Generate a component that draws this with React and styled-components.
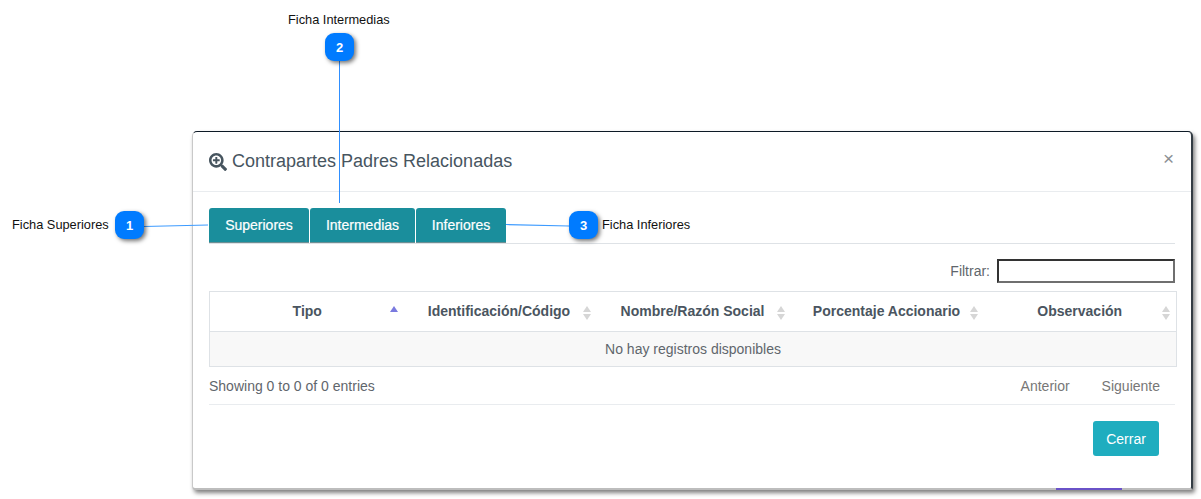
import React from "react";
import styled, { createGlobalStyle } from "styled-components";
import { FaSearchPlus } from "react-icons/fa";

const Global = createGlobalStyle`
  html, body { margin: 0; padding: 0; background: #fff; }
  body { font-family: "Liberation Sans", Arial, sans-serif; }
`;

const Page = styled.div`
  position: relative;
  width: 1201px;
  height: 499px;
  overflow: hidden;
  box-sizing: border-box;
  padding: 131px 8px 0 192px;
`;

const Modal = styled.div`
  position: relative;
  box-sizing: border-box;
  width: 1001px;
  height: 359px;
  background: #fff;
  border-left: 1px solid #c9c9c9;
  border-top: 1px solid #0d1a26;
  border-right: 2px solid #333c44;
  border-bottom: 2px solid #bdbdbd;
  border-radius: 5px 5px 3px 4px;
  box-shadow: 2px 3px 4px rgba(0, 0, 0, 0.5);
`;

const Header = styled.div`
  height: 60px;
  box-sizing: border-box;
  border-bottom: 1px solid #e9ecef;
  display: flex;
  align-items: center;
  justify-content: space-between;
  padding: 0 17px 0 16px;
`;

const Title = styled.h5`
  margin: 0;
  font-size: 18px;
  font-weight: 400;
  color: #47555f;
  display: flex;
  align-items: center;
  gap: 5px;
`;

const Close = styled.span`
  font-size: 19px;
  color: #8b8f93;
  margin-top: -6px;
`;

const Body = styled.div`
  padding: 16px 15px 0 16px;
`;

const Tabs = styled.div`
  display: flex;
  gap: 1px;
  width: 966px;
  height: 36px;
  box-sizing: border-box;
  border-bottom: 1px solid #dee2e6;
`;

const Tab = styled.div`
  height: 35px;
  box-sizing: border-box;
  width: ${p => p.$w}px;
  background: #1a8e9c;
  color: #fff;
  font-size: 14px;
  border-radius: 3px 3px 0 0;
  border-bottom: 1px solid #6d8f94;
  display: flex;
  align-items: center;
  justify-content: center;
  -webkit-text-stroke: 0.2px #fff;
`;

const FilterRow = styled.div`
  display: flex;
  justify-content: flex-end;
  align-items: center;
  gap: 7px;
  width: 966px;
  margin-top: 15px;
  font-size: 14px;
  color: #5f666c;
`;

const FilterInput = styled.div`
  width: 178px;
  height: 24px;
  box-sizing: border-box;
  border: 2px solid;
  border-color: #333 #6f6f6f #6f6f6f #333;
`;

const Table = styled.table`
  width: 967px;
  margin-top: 8px;
  border-collapse: collapse;
  table-layout: fixed;
  font-size: 14px;
  color: #4a5560;
`;

const Th = styled.th`
  position: relative;
  height: 40px;
  padding: 0 0 1px;
  box-sizing: border-box;
  width: ${p => p.$w}px;
  border-top: 1px solid #dee2e6;
  border-bottom: 1px solid #dee2e6;
  font-weight: 700;
  text-align: center;
  &:first-child { border-left: 1px solid #dee2e6; }
  &:last-child { border-right: 1px solid #dee2e6; padding-left: 2px; }
`;

const Sort = styled.svg`
  position: absolute;
  right: ${p => p.$right}px;
  top: 13px;
`;

const Empty = styled.td`
  height: 34px;
  padding: 0;
  text-align: center;
  background: #f8f8f8;
  border: 1px solid #dee2e6;
  color: #5f666c;
`;

const InfoRow = styled.div`
  display: flex;
  justify-content: space-between;
  align-items: center;
  width: 966px;
  height: 38px;
  box-sizing: border-box;
  padding-top: 1px;
  border-bottom: 1px solid #e9ecef;
  font-size: 14px;
  color: #5f666c;
`;

const Pager = styled.div`
  display: flex;
  gap: 32px;
  margin-right: 15px;
  color: #777;
`;

const Footer = styled.div`
  display: flex;
  justify-content: flex-end;
  width: 950px;
  margin-top: 16px;
`;

const CloseButton = styled.div`
  width: 66px;
  height: 35px;
  display: flex;
  align-items: center;
  justify-content: center;
  background: #1fadbf;
  color: #fff;
  font-size: 14px;
  border-radius: 3px;
`;

const Strip = styled.div`
  position: absolute;
  left: 863px;
  bottom: -2px;
  width: 66px;
  height: 2px;
  background: #6a52c8;
`;

const Badge = styled.div`
  position: absolute;
  left: ${p => p.$x}px;
  top: ${p => p.$y}px;
  width: 29px;
  height: 28px;
  border-radius: 9px;
  background: #007bff;
  color: #fff;
  font-size: 13px;
  font-weight: 700;
  display: flex;
  align-items: center;
  justify-content: center;
  box-shadow: 2px 2px 4px rgba(0, 0, 0, 0.55);
`;

const Note = styled.div`
  position: absolute;
  left: ${p => p.$x}px;
  top: ${p => p.$y}px;
  font-size: 12.8px;
  line-height: 14px;
  color: #111;
  white-space: nowrap;
`;

const Lines = styled.svg`
  position: absolute;
  left: 0;
  top: 0;
  pointer-events: none;
`;

function SortIcon({ right, active }) {
  return (
    <Sort $right={right} width="10" height="16" viewBox="0 0 10 16">
      <path d="M5 1 9 7H1Z" fill={active ? "#7a7adf" : "#d6d6d6"} />
      {!active && <path d="M5 15 1 9h8Z" fill="#d6d6d6" />}
    </Sort>
  );
}

export default function App() {
  return (
    <Page>
      <Global />
      <Modal>
        <Header>
          <Title><FaSearchPlus size={18} color="#47555f" />Contrapartes Padres Relacionadas</Title>
          <Close>×</Close>
        </Header>
        <Body>
          <Tabs>
            <Tab $w={100}>Superiores</Tab>
            <Tab $w={105}>Intermedias</Tab>
            <Tab $w={90}>Inferiores</Tab>
          </Tabs>
          <FilterRow>
            <span>Filtrar:</span>
            <FilterInput />
          </FilterRow>
          <Table>
            <thead>
              <tr>
                <Th $w={195}>Tipo<SortIcon right={6} active /></Th>
                <Th $w={189}>Identificación/Código<SortIcon right={2} /></Th>
                <Th $w={198}>Nombre/Razón Social<SortIcon right={6} /></Th>
                <Th $w={190}>Porcentaje Accionario<SortIcon right={3} /></Th>
                <Th $w={195}>Observación<SortIcon right={5} /></Th>
              </tr>
            </thead>
            <tbody>
              <tr><Empty colSpan={5}>No hay registros disponibles</Empty></tr>
            </tbody>
          </Table>
          <InfoRow>
            <span>Showing 0 to 0 of 0 entries</span>
            <Pager><span>Anterior</span><span>Siguiente</span></Pager>
          </InfoRow>
          <Footer><CloseButton>Cerrar</CloseButton></Footer>
        </Body>
        <Strip />
      </Modal>
      <Lines width="1201" height="499" viewBox="0 0 1201 499" fill="none">
        <path d="M144 226.5 208 225" stroke="#3d9bff" strokeWidth="1.2" />
        <path d="M339.5 61V203" stroke="#2f8fff" strokeWidth="1" />
        <path d="M506 224.5 569 226" stroke="#3d9bff" strokeWidth="1.2" />
      </Lines>
      <Note $x={12} $y={218}>Ficha Superiores</Note>
      <Note $x={288} $y={13}>Ficha Intermedias</Note>
      <Note $x={602} $y={218}>Ficha Inferiores</Note>
      <Badge $x={115} $y={211}>1</Badge>
      <Badge $x={325} $y={33}>2</Badge>
      <Badge $x={569} $y={211}>3</Badge>
    </Page>
  );
}
